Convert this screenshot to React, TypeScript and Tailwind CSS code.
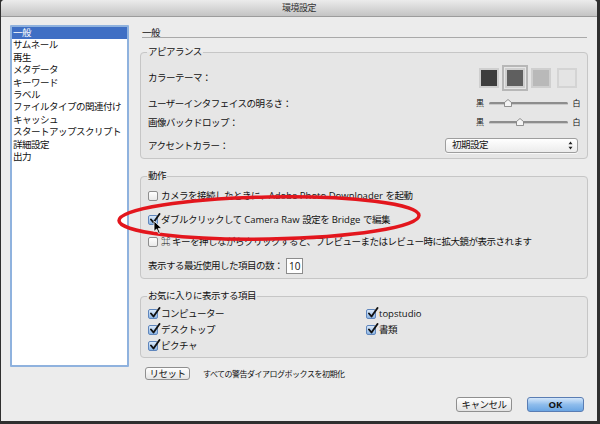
import React from "react";

const menu = [
  "一般",
  "サムネール",
  "再生",
  "メタデータ",
  "キーワード",
  "ラベル",
  "ファイルタイプの関連付け",
  "キャッシュ",
  "スタートアップスクリプト",
  "詳細設定",
  "出力",
];

function CheckBox({ checked }: { checked?: boolean }) {
  if (!checked) {
    return (
      <span className="block w-[10px] h-[10px] shrink-0 rounded-[2px] border border-[#8e8e8e] bg-gradient-to-b from-white to-[#e9e9e9]" />
    );
  }
  return (
    <span className="relative block w-[10px] h-[10px] shrink-0 rounded-[2px] border border-[#5f86bd] bg-gradient-to-b from-[#dbe9f8] to-[#8cb5e4]">
      <svg className="absolute -top-[3px] left-[0px]" width="12" height="12" viewBox="0 0 12 12">
        <path d="M2 6.5 L4.5 9.5 L10.5 1" fill="none" stroke="#111" strokeWidth="1.9" strokeLinecap="round" strokeLinejoin="round" />
      </svg>
    </span>
  );
}

function Slider({ pos }: { pos: number }) {
  return (
    <div className="flex items-center gap-[5px] text-[8px] mr-[-3px]">
      <span>黒</span>
      <div className="relative w-[79px] h-[3px] rounded-full bg-[#8d8d8d] border-b border-[#c9c9c9]">
        <svg className="absolute -top-[3px]" style={{ left: pos - 4 }} width="8" height="8" viewBox="0 0 8 8">
          <path d="M4 0.5 L7.5 3.5 L7.5 7.5 L0.5 7.5 L0.5 3.5 Z" fill="#f4f4f4" stroke="#7a7a7a" strokeWidth="0.8" />
        </svg>
      </div>
      <span>白</span>
    </div>
  );
}

export default function App() {
  return (
    <div className="relative w-[600px] h-[424px] bg-[#2f2f2f] font-['Open_Sans','Noto_Sans_CJK_JP',sans-serif] text-[#111] text-[9.5px] tracking-[-0.5px] overflow-hidden">
      <div className="ml-[1px] w-[596px] h-[421px] bg-[#ececec] rounded-t-[4px] flex flex-col">
        {/* title bar */}
        <div className="h-[17px] shrink-0 rounded-t-[4px] bg-gradient-to-b from-[#ececec] to-[#c4c4c4] border-b border-[#9c9c9c] text-center text-[9px] leading-[16px] text-[#333]">
          環境設定
        </div>

        <div className="flex px-[9px] pt-[8px]">
          {/* left list */}
          <div className="w-[119px] h-[342px] shrink-0 border-2 border-[#8fb2de] bg-white rounded-[1px]">
            <ul>
              {menu.map((m, i) => (
                <li
                  key={m}
                  className={`h-[12.4px] leading-[12.4px] pl-[1px] whitespace-nowrap ${i === 0 ? "bg-[#3f6fc4] text-white" : ""}`}
                >
                  {m}
                </li>
              ))}
            </ul>
          </div>

          {/* right column */}
          <div className="ml-[11px] w-[449px] flex flex-col">
            <div className="mt-[2px] ml-[2px] mr-[1px] h-[11px] leading-[11px] border-b border-[#a9a9a9]">一般</div>

            {/* appearance */}
            <fieldset className="mt-[8px] border border-[#c6c6c6] rounded-[4px] bg-[#e6e6e6] pl-[6px] pr-[10px] pb-[5px]">
              <legend className="px-[1px] leading-[12px]">アピアランス</legend>
              <div className="mt-[7px] h-[25px] pl-[1px] flex items-center justify-between">
                <span className="pt-[2px]">カラーテーマ：</span>
                <div className="flex gap-[6px]">
                  <span className="w-[20px] h-[20px] border-2 border-[#cfcfcf] bg-[#3d3d3d]" />
                  <span className="w-[20px] h-[20px] border-2 border-[#cfcfcf] bg-[#5f5f5f] ring-2 ring-[#b7b7b7] ring-offset-1 ring-offset-[#e6e6e6]" />
                  <span className="w-[20px] h-[20px] border-2 border-[#cfcfcf] bg-[#b9b9b9]" />
                  <span className="w-[20px] h-[20px] border-2 border-[#d4d4d4] bg-[#e4e4e4]" />
                </div>
              </div>
              <div className="mt-[6px] h-[14px] pl-[1px] flex items-center justify-between">
                <span className="pt-[2px]">ユーザーインタフェイスの明るさ：</span>
                <Slider pos={19} />
              </div>
              <div className="mt-[5px] h-[14px] pl-[1px] flex items-center justify-between">
                <span className="pt-[2px]">画像バックドロップ：</span>
                <Slider pos={31} />
              </div>
              <div className="mt-[8px] h-[16px] pl-[1px] flex items-center justify-between">
                <span className="pt-[2px]">アクセントカラー：</span>
                <div className="w-[133px] h-[15px] mr-[-1px] flex items-center justify-between rounded-[3px] border border-[#9e9e9e] bg-gradient-to-b from-white to-[#ececec] pl-[6px] pr-[4px] shadow-[0_1px_0_#f8f8f8]">
                  <span>初期設定</span>
                  <svg width="5" height="9" viewBox="0 0 5 9">
                    <path d="M2.5 0.5 L4.5 3.3 L0.5 3.3 Z M2.5 8.5 L4.5 5.7 L0.5 5.7 Z" fill="#222" />
                  </svg>
                </div>
              </div>
            </fieldset>

            {/* action */}
            <fieldset className="mt-[11px] border border-[#c6c6c6] rounded-[4px] bg-[#e6e6e6] pl-[6px] pr-[10px] pb-[4px]">
              <legend className="px-[1px] leading-[12px]">動作</legend>
              <div className="mt-[7px] h-[14px] pl-[1px] flex items-center gap-[3px] whitespace-nowrap">
                <CheckBox />
                <span>
                  カメラを接続したときに、<span className="tracking-normal">Adobe Photo Downloader </span>を起動
                </span>
              </div>
              <div className="mt-[10px] h-[14px] pl-[1px] flex items-center gap-[3px] whitespace-nowrap">
                <CheckBox checked />
                <span>
                  ダブルクリックして<span className="tracking-normal"> Camera Raw </span>設定を<span className="tracking-normal"> Bridge </span>で編集
                </span>
              </div>
              <div className="mt-[8px] h-[14px] pl-[1px] flex items-center gap-[3px] whitespace-nowrap">
                <CheckBox />
                <span>⌘ キーを押しながらクリックすると、プレビューまたはレビュー時に拡大鏡が表示されます</span>
              </div>
              <div className="mt-[9px] h-[16px] pl-[1px] flex items-center gap-[3px]">
                <span className="pt-[1px]">表示する最近使用した項目の数：</span>
                <span className="w-[17px] h-[16px] border border-[#8c8c8c] bg-white pl-[2px] leading-[14px] text-[10px] tracking-normal">10</span>
              </div>
            </fieldset>

            {/* favorites */}
            <fieldset className="mt-[11px] border border-[#c6c6c6] rounded-[4px] bg-[#e6e6e6] pl-[6px] pr-[10px] pb-[3px]">
              <legend className="px-[1px] leading-[12px]">お気に入りに表示する項目</legend>
              <div className="mt-[4px] pl-[1px] grid grid-cols-[218px_1fr] auto-rows-[16px]">
                <div className="flex items-center gap-[3px]"><CheckBox checked /><span>コンピューター</span></div>
                <div className="flex items-center gap-[3px]"><CheckBox checked /><span className="tracking-normal">topstudio</span></div>
                <div className="flex items-center gap-[3px]"><CheckBox checked /><span>デスクトップ</span></div>
                <div className="flex items-center gap-[3px]"><CheckBox checked /><span>書類</span></div>
                <div className="flex items-center gap-[3px]"><CheckBox checked /><span>ピクチャ</span></div>
              </div>
            </fieldset>

            {/* reset */}
            <div className="mt-[9px] pl-[5px] flex items-center">
              <button className="w-[45px] h-[13px] rounded-[3px] border border-[#8f8f8f] bg-gradient-to-b from-white to-[#e4e4e4] leading-[11px] text-[9.5px]">
                リセット
              </button>
              <span className="ml-[13px] text-[8px]">すべての警告ダイアログボックスを初期化</span>
            </div>

            {/* dialog buttons */}
            <div className="mt-[17px] pr-[4px] flex justify-end gap-[15px]">
              <button className="w-[56px] h-[15px] rounded-[3px] border border-[#8f8f8f] bg-gradient-to-b from-white to-[#e2e2e2] leading-[13px]">
                キャンセル
              </button>
              <button className="w-[57px] h-[15px] rounded-[3px] border border-[#5a7db3] bg-gradient-to-b from-[#d4e6fa] via-[#8fbdec] to-[#6aa5e3] leading-[13px] font-bold tracking-normal">
                OK
              </button>
            </div>
          </div>
        </div>
      </div>

      {/* annotation ellipse */}
      <svg className="absolute left-[114px] top-[191px] pointer-events-none" width="310" height="54" viewBox="0 0 310 54">
        <ellipse cx="155" cy="27" rx="150" ry="21" fill="none" stroke="#e3161d" strokeWidth="3.5" transform="rotate(-1 155 27)" />
      </svg>

      {/* mouse cursor */}
      <svg className="absolute left-[153px] top-[220px] pointer-events-none" width="10" height="15" viewBox="0 0 10 15">
        <path d="M1 1 L1 11.5 L3.6 9 L5.6 13.5 L7.2 12.8 L5.3 8.4 L8.8 8.4 Z" fill="#000" stroke="#fff" strokeWidth="0.8" />
      </svg>
    </div>
  );
}
